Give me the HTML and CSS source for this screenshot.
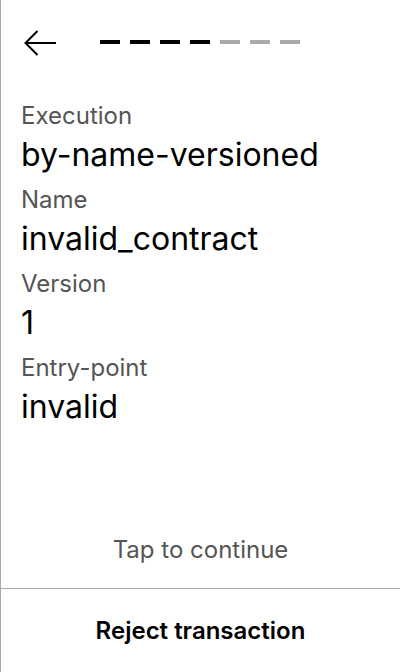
FILE: index.html
```html
<!DOCTYPE html>
<html>
<head>
<meta charset="utf-8">
<link rel="stylesheet" href="styles.css">
</head>
<body>
<div class="screen">
  <div class="header">
    <svg class="back" width="32" height="26" viewBox="0 0 32 26">
      <path d="M32 13H1.5M13.5 1L1.5 13L13.5 25" fill="none" stroke="#000" stroke-width="2"/>
    </svg>
    <div class="steps">
      <span class="step on"></span><span class="step on"></span><span class="step on"></span><span class="step on"></span><span class="step"></span><span class="step"></span><span class="step"></span>
    </div>
  </div>
  <div class="fields">
    <div class="label">Execution</div>
    <div class="value">by-name-versioned</div>
    <div class="label">Name</div>
    <div class="value">invalid_contract</div>
    <div class="label">Version</div>
    <div class="value">1</div>
    <div class="label">Entry-point</div>
    <div class="value">invalid</div>
  </div>
  <div class="tap">Tap to continue</div>
  <div class="reject">Reject transaction</div>
</div>
</body>
</html>
```
FILE: styles.css
```css
html, body {
  margin: 0;
  padding: 0;
  background: #fff;
}
body {
  font-family: Inter, "Noto Sans", sans-serif;
  color: #000;
}
.screen {
  width: 399px;
  height: 672px;
  border-left: 1px solid #aaa;
  display: flex;
  flex-direction: column;
}
.header {
  display: flex;
  align-items: center;
  height: 26px;
  padding: 30px 0 0 23px;
}
.back {
  display: block;
}
.steps {
  display: flex;
  gap: 10px;
  margin-left: 44px;
  margin-top: -2px;
}
.step {
  width: 20px;
  height: 4px;
  background: #aaa;
}
.step.on {
  background: #000;
}
.fields {
  padding: 44px 20px 0 20px;
  flex: 1;
}
.label {
  font-size: 24px;
  line-height: 32px;
  color: #555;
}
.value {
  font-size: 32px;
  line-height: 52px;
  margin-top: -3px;
  margin-bottom: 3px;
}
.tap {
  text-align: center;
  font-size: 24px;
  color: #555;
  line-height: 32px;
  padding-bottom: 22px;
  border-bottom: 1px solid #aaa;
}
.reject {
  text-align: center;
  font-size: 24px;
  font-weight: 600;
  height: 83px;
  line-height: 83px;
}
```
